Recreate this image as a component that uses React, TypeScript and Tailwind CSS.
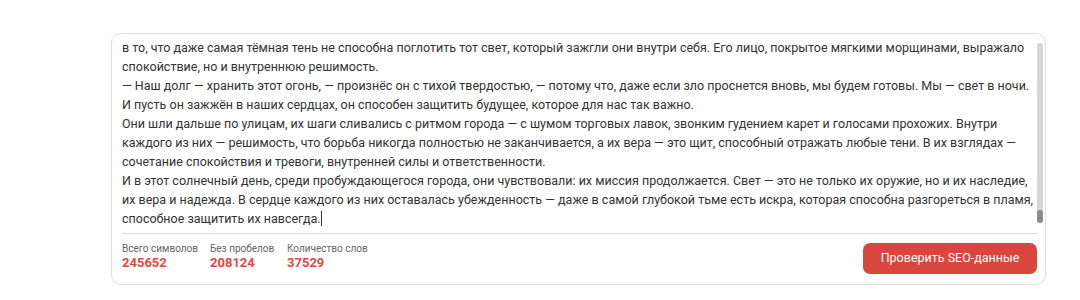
import React from "react";

const lines: string[] = [
  "в то, что даже самая тёмная тень не способна поглотить тот свет, который зажгли они внутри себя. Его лицо, покрытое мягкими морщинами, выражало",
  "спокойствие, но и внутреннюю решимость.",
  "— Наш долг — хранить этот огонь, — произнёс он с тихой твердостью, — потому что, даже если зло проснется вновь, мы будем готовы. Мы — свет в ночи.",
  "И пусть он зажжён в наших сердцах, он способен защитить будущее, которое для нас так важно.",
  "Они шли дальше по улицам, их шаги сливались с ритмом города — с шумом торговых лавок, звонким гудением карет и голосами прохожих. Внутри",
  "каждого из них — решимость, что борьба никогда полностью не заканчивается, а их вера — это щит, способный отражать любые тени. В их взглядах —",
  "сочетание спокойствия и тревоги, внутренней силы и ответственности.",
  "И в этот солнечный день, среди пробуждающегося города, они чувствовали: их миссия продолжается. Свет — это не только их оружие, но и их наследие,",
  "их вера и надежда. В сердце каждого из них оставалась убежденность — даже в самой глубокой тьме есть искра, которая способна разгореться в пламя,",
];

export default function App() {
  return (
    <div className="w-[1080px] h-[300px] bg-white font-['Roboto',sans-serif] overflow-hidden">
      <div className="ml-[111px] mt-[33px] w-[935px] rounded-[10px] border border-[#dedede] bg-white pt-[4px] pb-[10px] pl-[10px] pr-[2px]">
        <div className="flex">
          <div className="flex-1 min-w-0 overflow-hidden text-[12.5px] leading-[19px] text-[#333333]">
            {lines.map((l, i) => (
              <div key={i} className="whitespace-nowrap">
                {l}
              </div>
            ))}
            <div className="whitespace-nowrap">
              способное защитить их навсегда.
              <span className="inline-block w-px h-[15px] bg-[#333333] align-[-3px]" />
            </div>
          </div>
          <div className="shrink-0 w-[6px] mt-[5px] mb-[5px] rounded-full bg-[#d6d6d6] flex flex-col justify-end">
            <div className="h-[13px] rounded-full bg-[#8a8a8a]" />
          </div>
        </div>
        <div className="mt-[5px] mr-[6px] h-px bg-[#dddddd]" />
        <div className="mt-[9px] mr-[6px] flex items-start justify-between">
          <div className="flex">
            <div className="w-[88px]">
              <div className="text-[10px] leading-[12px] text-[#666666]">Всего символов</div>
              <div className="text-[13px] leading-[16px] font-bold text-[#e8453c]">245652</div>
            </div>
            <div className="w-[77px]">
              <div className="text-[10px] leading-[12px] text-[#666666]">Без пробелов</div>
              <div className="text-[13px] leading-[16px] font-bold text-[#e8453c]">208124</div>
            </div>
            <div>
              <div className="text-[10px] leading-[12px] text-[#666666]">Количество слов</div>
              <div className="text-[13px] leading-[16px] font-bold text-[#e8453c]">37529</div>
            </div>
          </div>
          <button className="w-[174px] h-[31px] rounded-[7px] bg-[#d9463d] text-white text-[12.5px] flex items-center justify-center">
            Проверить SEO-данные
          </button>
        </div>
      </div>
    </div>
  );
}
